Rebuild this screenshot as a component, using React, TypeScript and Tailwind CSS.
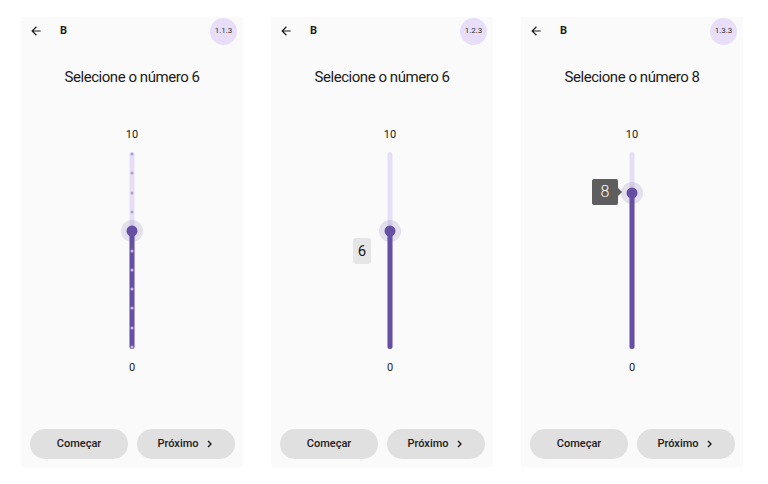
import React from "react";

type PanelProps = {
  badge: string;
  target: number;
  value: number;
  variant: "ticks" | "box" | "tooltip";
};

const TOP_INSET = 2;
const TRACK_H = 197;
const SPAN = 193;

function posFor(v: number) {
  return TOP_INSET + ((10 - v) / 10) * SPAN;
}

function BackArrow() {
  return (
    <svg width="14" height="14" viewBox="0 0 24 24" fill="#1d1b20">
      <path d="M20 11H7.83l5.59-5.59L12 4l-8 8 8 8 1.41-1.41L7.83 13H20v-2z" />
    </svg>
  );
}

function Chevron() {
  return (
    <svg width="5" height="8" viewBox="0 0 5 8" fill="none" stroke="#1d1b20" strokeWidth="1.4">
      <path d="M1 1l3 3-3 3" />
    </svg>
  );
}

function VerticalSlider({ value, variant }: { value: number; variant: PanelProps["variant"] }) {
  const thumbY = posFor(value);
  const ticks = Array.from({ length: 11 }, (_, i) => i);

  return (
    <div className="relative w-[22px]" style={{ height: TRACK_H }}>
      {/* inactive track */}
      <div className="absolute left-1/2 top-0 h-full w-[5px] -translate-x-1/2 rounded-full bg-[#e6def6]" />
      {/* active track */}
      <div
        className="absolute bottom-0 left-1/2 w-[5px] -translate-x-1/2 rounded-full bg-[#6650a4]"
        style={{ top: thumbY }}
      />
      {variant === "ticks" &&
        ticks.map((t) => (
          <div
            key={t}
            className={
              t <= value
                ? "absolute left-1/2 h-[3px] w-[3px] -translate-x-1/2 -translate-y-1/2 rounded-full bg-[#c9bcec]"
                : "absolute left-1/2 h-[3px] w-[3px] -translate-x-1/2 -translate-y-1/2 rounded-full bg-[#ad9fd6]"
            }
            style={{ top: posFor(t) }}
          />
        ))}
      {/* halo + thumb */}
      <div
        className="absolute left-1/2 h-[22px] w-[22px] -translate-x-1/2 -translate-y-1/2 rounded-full bg-[#6650a4]/15"
        style={{ top: thumbY }}
      />
      <div
        className="absolute left-1/2 h-[11px] w-[11px] -translate-x-1/2 -translate-y-1/2 rounded-full bg-[#6650a4]"
        style={{ top: thumbY }}
      />
      {variant === "box" && (
        <div
          className="absolute right-[30px] flex h-[26px] w-[18px] items-center justify-center rounded-[3px] bg-[#e6e6e6] text-[15px] text-[#1d1b20]"
          style={{ top: thumbY + 7 }}
        >
          {value}
        </div>
      )}
      {variant === "tooltip" && (
        <div
          className="absolute right-[25px] flex h-[26px] w-[26px] -translate-y-1/2 items-center justify-center rounded-[2px] bg-[#5e5e5e] text-[16px] font-light text-white"
          style={{ top: thumbY - 1 }}
        >
          {value}
          <div className="absolute -right-[4px] top-1/2 h-0 w-0 -translate-y-1/2 border-y-[4px] border-l-[4px] border-y-transparent border-l-[#5e5e5e]" />
        </div>
      )}
    </div>
  );
}

function Panel({ badge, target, value, variant }: PanelProps) {
  return (
    <div className="flex h-[450px] w-[222px] flex-col bg-[#fafafa] text-[#1d1b20]">
      <div className="flex h-[28px] items-center pl-[8px] pr-[6px]">
        <BackArrow />
        <span className="ml-[17px] text-[11px] font-bold">B</span>
        <div className="ml-auto flex h-[27px] w-[27px] items-center justify-center rounded-full bg-[#e8defa] text-[8px] text-[#333]">
          {badge}
        </div>
      </div>

      <h1 className="mt-[23px] text-center text-[15px] leading-[18px] tracking-[-0.45px]">
        Selecione o número {target}
      </h1>

      <div className={variant === "box" ? "flex flex-col items-center pl-[16px]" : "flex flex-col items-center"}>
        <span className="mt-[42px] text-[11px] leading-[14px]">10</span>
        <div className="mt-[10px]">
          <VerticalSlider value={value} variant={variant} />
        </div>
        <span className="mt-[12px] text-[11px] leading-[14px]">0</span>
      </div>

      <div className="mt-auto flex gap-[9px] pb-[8px] pl-[9px]">
        <button className="h-[30px] w-[98px] rounded-full bg-[#e0e0e0] text-[11px] font-medium text-[#1d1b20]">
          Começar
        </button>
        <button className="flex h-[30px] w-[98px] items-center justify-center gap-[8px] rounded-full bg-[#e0e0e0] pr-[3px] text-[11px] font-medium text-[#1d1b20]">
          <span>Próximo</span>
          <Chevron />
        </button>
      </div>
    </div>
  );
}

export default function App() {
  return (
    <div
      className="flex h-[484px] w-[768px] gap-[28px] bg-white pl-[21px] pt-[17px]"
      style={{ fontFamily: "Roboto, 'Noto Sans', sans-serif" }}
    >
      <Panel badge="1.1.3" target={6} value={6} variant="ticks" />
      <Panel badge="1.2.3" target={6} value={6} variant="box" />
      <Panel badge="1.3.3" target={8} value={8} variant="tooltip" />
    </div>
  );
}
